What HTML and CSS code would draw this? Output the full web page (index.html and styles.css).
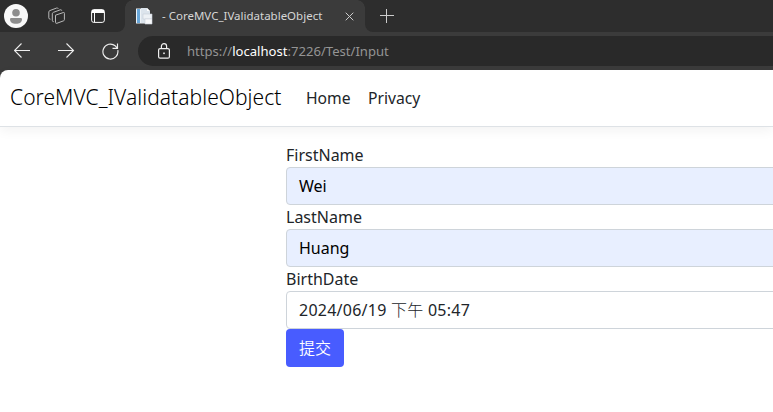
FILE: index.html
```html
<!DOCTYPE html>
<html lang="zh-Hant">
<head>
<meta charset="utf-8">
<title>- CoreMVC_IValidatableObject</title>
<link rel="stylesheet" href="styles.css">
</head>
<body>
<div class="browser">
  <div class="tab-strip">
    <div class="strip-actions">
      <svg class="avatar" width="24" height="24" viewBox="0 0 24 24"><circle cx="12" cy="12" r="12" fill="#f8f8f8"/><circle cx="12" cy="8.700" r="3.800" fill="#8d8d8d"/><path d="M6 15.200q0-1.200 1.200-1.200h9.600q1.200 0 1.200 1.200c0 2.900-2.500 4.600-6 4.600s-6-1.700-6-4.600z" fill="#8d8d8d"/></svg>
      <svg class="workspaces" width="18" height="18" viewBox="0 0 18 18" fill="none" stroke="#b9b9b9" stroke-width="1"><path d="M7.500 8.200 15.400 5.500q1-.3 1 .8v6.400q0 .8-.8 1.100l-6.700 2.500q-1.400.4-1.400-1z"/><path d="M5.700 14.700q-1.400 0-1.400-1.400V6.800q0-1 1-1.400l7-2.600q1.200-.4 1.500.9"/><path d="M2.500 12.200q-1.700 0-1.700-1.400V5q0-1 1-1.400L8.700 1q1.200-.3 1.600.7"/></svg>
      <svg class="tab-menu" width="14" height="14" viewBox="0 0 14 14" fill="none" stroke="#fff"><rect x=".6" y=".6" width="12.800" height="12.800" rx="2.200"/><path d="M1 2.500h12" stroke-width="3"/><path d="M3.500 3v10"/></svg>
    </div>
    <div class="tab">
      <svg class="favicon" width="17" height="17" viewBox="0 0 17 17"><path d="M0 .5h11v15H0z" fill="#eef3f7"/><path d="M1 1h3v14H1z" fill="#69a7d9"/><path d="M5 0h6l3 3v12H5z" fill="#dce4ec"/><path d="M11 0v3h3" fill="#fff"/><path d="M7 6h9v5H7z" fill="#edf1f5" stroke="#c6ced7" stroke-width=".6"/><path d="M9 11h7v5H9z" fill="#f9fafb" stroke="#cbd2da" stroke-width=".6"/></svg>
      <span class="tab-title">- CoreMVC_IValidatableObject</span>
      <svg class="tab-close" width="9" height="9" viewBox="0 0 9 9" stroke="#ccc"><path d="m.7.700 7.600 7.600M8.300.7.700 8.300"/></svg>
    </div>
    <svg class="new-tab" width="14" height="14" viewBox="0 0 14 14" stroke="#ccc"><path d="M0 6.500h14M6.500 0v14"/></svg>
  </div>
  <div class="toolbar">
    <svg class="back" width="17" height="16" viewBox="0 0 17 16" fill="none" stroke="#eee" stroke-width="1.100"><path d="M16 7.500H.8M7.500.5.500 7.500l7 7"/></svg>
    <svg class="forward" width="17" height="16" viewBox="0 0 17 16" fill="none" stroke="#eee" stroke-width="1.100"><path d="M0 7.500h15.500M8.500.5l7 7-7 7"/></svg>
    <svg class="reload" width="17" height="17" viewBox="0 0 17 17" fill="none" stroke="#eee" stroke-width="1.150"><path d="M15.800 7.200a7.500 7.500 0 1 1-2.600-4.400l2.300 2.400M15.500.500v4.800h-5"/></svg>
    <div class="address">
      <svg class="lock" width="12" height="16" viewBox="0 0 12 16" fill="none" stroke="#eee" stroke-width="1.200"><rect x=".6" y="5.600" width="10.800" height="9.600" rx="1.500"/><path d="M3.400 5.500V3.200a2.600 2.600 0 0 1 5.200 0v2.300"/><rect x="5.200" y="9.500" width="1.600" height="1.600" fill="#eee" stroke="none"/></svg>
      <span class="url">https://<span class="host">localhost</span>:7226/Test/Input</span>
    </div>
  </div>
  <div class="page">
    <header class="navbar">
      <a class="brand">CoreMVC_IValidatableObject</a>
      <a class="nav-link home">Home</a>
      <a class="nav-link privacy">Privacy</a>
    </header>
    <form class="form">
      <label class="first">FirstName</label>
      <div class="control filled">Wei</div>
      <label class="last">LastName</label>
      <div class="control filled">Huang</div>
      <label class="birth">BirthDate</label>
      <div class="control date">2024/06/19 <span class="meridiem">下午</span> 05:47</div>
      <button class="submit" type="button">提交</button>
    </form>
  </div>
</div>
</body>
</html>
```
FILE: styles.css
```css
* { box-sizing: border-box; }
body { margin: 0; overflow: hidden; font-family: "Noto Sans", "Noto Sans CJK TC", sans-serif; }
svg { display: block; flex: none; }
.browser { display: flex; flex-direction: column; height: 412px; background: #3b3b3b; }
.tab-strip { display: flex; height: 32px; flex: none; background: #3b3b3b; }
.strip-actions { display: flex; align-items: center; width: 125px; flex: none; padding-left: 4px; background: #2d2d2d; border-bottom-right-radius: 8px; }
.workspaces { margin-left: 20px; }
.tab-menu { margin-left: 25px; }
.tab { display: flex; align-items: center; width: 240px; flex: none; padding-left: 11px; background: #3b3b3b; position: relative; }
.tab::before, .tab::after { content: ""; position: absolute; top: 0; width: 8px; height: 8px; }
.tab::before { left: 0; background: radial-gradient(circle at 8px 8px, transparent 7.5px, #2d2d2d 8px); }
.tab::after { right: 0; background: radial-gradient(circle at 0 8px, transparent 7.5px, #2d2d2d 8px); }
.tab-title { width: 163px; margin-left: 9px; font-size: 11.5px; line-height: 16px; color: #d6d6d6; white-space: nowrap; }
.tab-close { margin-left: 20px; }
.new-tab { box-sizing: content-box; padding: 9px 380px 9px 15px; background: #2d2d2d; border-bottom-left-radius: 8px; }
.toolbar { display: flex; align-items: center; height: 38px; flex: none; padding-left: 14px; }
.forward { margin-left: 27px; }
.reload { margin-left: 27px; }
.address { display: flex; align-items: center; flex: 1; height: 30px; margin-left: 19px; padding-left: 20px; background: #292929; border-radius: 15px 0 0 15px; }
.url { margin-left: 17px; font-size: 13.1px; color: #949494; white-space: nowrap; }
.host { color: #fff; }
.page { flex: 1; background: #fff; border-top-left-radius: 8px; color: #212529; }
.navbar { display: flex; align-items: center; height: 57px; padding-left: 10px; border-bottom: 1px solid #dee2e6; box-shadow: 0 4px 12px rgba(0, 0, 0, .05); border-top-left-radius: 8px; }
.brand { width: 296px; padding-bottom: 2px; font-size: 21px; font-weight: 300; letter-spacing: .05px; color: #000; white-space: nowrap; }
.nav-link { font-size: 15.7px; }
.home { width: 62px; }
.form { display: flex; flex-direction: column; align-items: flex-start; margin: 16px -20px 0 286px; font-size: 16px; line-height: 24px; }
.form label { height: 24px; }
.control { width: 100%; height: 38px; padding: 6px 12px; border: 1px solid #ced4da; border-radius: 4px; white-space: pre; }
.filled { color: #000; background: #e8efff; }
.date { padding-top: 5px; letter-spacing: .25px; }
.meridiem, .submit { font-family: "Noto Sans CJK TC", sans-serif; font-weight: 300; }
.submit { width: 58px; height: 38px; padding: 0 0 2px; border: 0; border-radius: 4px; background: #485cff; color: #fff; font-size: 16px; font-weight: 350; line-height: 24px; }
```
